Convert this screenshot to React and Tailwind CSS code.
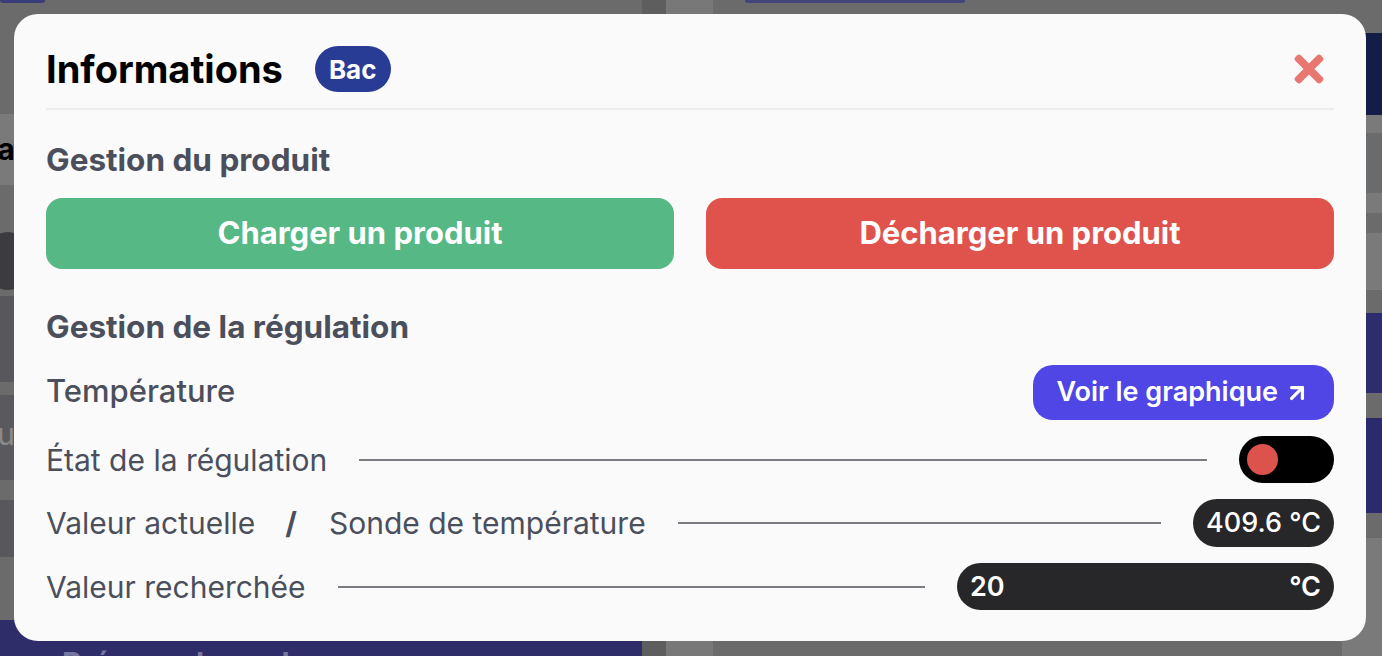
import { FaTimes } from "react-icons/fa";
import { ArrowUpRight } from "lucide-react";

function Band({ className, children }) {
    return <div className={`w-full shrink-0 ${className}`}>{children}</div>;
}

function Gap({ h }) {
    return <div className="shrink-0" style={{ height: h }} />;
}

function Row({ children }) {
    return <div className="flex items-center gap-8 text-[30px] leading-9 text-[#4b4f5c]">{children}</div>;
}

function Line() {
    return <div className="flex-1 h-[2px] bg-[#7b7b82]" />;
}

export default function App() {
    return (
        <div className="relative w-[1382px] h-[656px] overflow-hidden bg-[#6b6b6b]" style={{ fontFamily: "Inter, 'Liberation Sans', sans-serif" }}>
            {/* dimmed page behind the modal */}
            <div className="flex h-full">
                <div className="w-[642px] flex flex-col">
                    <div className="shrink-0 h-[3px] w-[45px] rounded-b-lg bg-[#3a3d78]" />
                    <Gap h={111} />
                    <Band className="h-[71px] bg-[#7a7a7a] pt-5">
                        <div className="w-[15px] overflow-hidden flex justify-end">
                            <span className="whitespace-nowrap text-[30px] font-bold text-black leading-none">Standa</span>
                        </div>
                    </Band>
                    <Gap h={47} />
                    <div className="shrink-0 h-[58px] w-[44px] rounded-full bg-[#3c3c40] -ml-[14px]" />
                    <Gap h={6} />
                    <Band className="h-[86px] bg-[#58585c]" />
                    <Gap h={13} />
                    <Band className="h-[85px] bg-[#5a5a5e] pt-6">
                        <div className="w-[15px] overflow-hidden flex justify-end">
                            <span className="whitespace-nowrap text-[30px] text-[#8a8a8a] leading-none">Cu</span>
                        </div>
                    </Band>
                    <Gap h={20} />
                    <Band className="h-[57px] bg-[#58585c]" />
                    <Gap h={63} />
                    <div className="flex-1 min-h-0 overflow-hidden bg-[#2e2d6a] pl-[62px] pt-[28px] text-[30px] font-bold text-[#77769e] leading-none">Préparer le cycle</div>
                </div>
                <div className="w-[24px] bg-[#5e5e5e]" />
                <div className="w-[47px] bg-[#787878]" />
                <div className="flex-1 flex flex-col">
                    <div className="shrink-0 ml-[32px] h-[3px] w-[220px] rounded-b-lg bg-[#434578]" />
                    <Gap h={30} />
                    <div className="flex flex-col flex-1 min-h-0 items-end">
                        <div className="shrink-0 h-[82px] w-[40px] bg-[#141c48]" />
                        <div className="shrink-0 h-[18px] w-[40px] bg-[#7a7a7a]" />
                        <div className="shrink-0 h-[60px] w-[40px] bg-[#6a6b6d]" />
                        <div className="shrink-0 h-[20px] w-[40px] bg-[#7a7a7a]" />
                        <div className="shrink-0 h-[20px] w-[40px]" />
                        <div className="shrink-0 h-[57px] w-[40px] bg-[#7a7a7a]" />
                        <div className="shrink-0 h-[23px] w-[40px]" />
                        <div className="shrink-0 h-[80px] w-[40px] bg-[#2d2c6c]" />
                        <div className="shrink-0 h-[25px] w-[40px]" />
                        <div className="shrink-0 h-[95px] w-[40px] bg-[#2b2a6c]" />
                        <div className="shrink-0 h-[25px] w-[40px]" />
                        <div className="flex-1 w-[40px] bg-[#7a7a7a]" />
                    </div>
                </div>
            </div>

            {/* modal */}
            <div className="absolute inset-0 pt-[14px] pl-[14px] pr-[16px] pb-[15px]">
                <div className="h-full rounded-[24px] bg-[#fafafa] p-8 flex flex-col">
                    <div className="flex items-center">
                        <h1 className="text-[38px] leading-none font-bold text-black">Informations</h1>
                        <span className="ml-8 h-[46px] px-[14px] rounded-full bg-[#283c96] text-white text-[26px] font-bold flex items-center">Bac</span>
                        <button className="ml-auto mr-[4px] text-[#e8776f]">
                            <FaTimes size={42} />
                        </button>
                    </div>
                    <div className="mt-4 h-[2px] shrink-0 bg-[#ececec]" />

                    <h2 className="mt-8 text-[31.5px] leading-9 font-bold text-[#4b4f5c]">Gestion du produit</h2>
                    <div className="mt-5 grid grid-cols-2 gap-8">
                        <button className="h-[71px] rounded-2xl bg-[#55b885] text-white text-[31px] font-bold">Charger un produit</button>
                        <button className="h-[71px] rounded-2xl bg-[#e0534d] text-white text-[31px] font-bold">Décharger un produit</button>
                    </div>

                    <h2 className="mt-10 text-[31.5px] leading-9 font-bold text-[#4b4f5c]">Gestion de la régulation</h2>
                    <div className="mt-5 flex flex-col gap-4">
                        <div className="flex items-center justify-between">
                            <span className="text-[31px] leading-9 font-medium text-[#4b4f5c] -mt-1">Température</span>
                            <button className="h-[55px] pl-[23px] pr-6 rounded-[20px] bg-[#4f46e5] text-white text-[27px] font-semibold flex items-center gap-[6px]">
                                Voir le graphique
                                <ArrowUpRight size={26} strokeWidth={3} />
                            </button>
                        </div>
                        <Row>
                            <span>État de la régulation</span>
                            <Line />
                            <div className="h-[47px] w-[95px] rounded-full bg-black flex items-center px-2">
                                <div className="h-[31px] w-[31px] rounded-full bg-[#dc524c]" />
                            </div>
                        </Row>
                        <Row>
                            <span className="flex items-center gap-8">
                                Valeur actuelle
                                <span className="font-bold -ml-[2px]">/</span>
                                Sonde de température
                            </span>
                            <Line />
                            <span className="h-[48px] px-[13px] rounded-full bg-[#27272a] text-white text-[27px] font-medium flex items-center">409.6 °C</span>
                        </Row>
                        <Row>
                            <span>Valeur recherchée</span>
                            <Line />
                            <div className="h-[47px] w-[377px] rounded-full bg-[#27272a] text-white text-[27px] font-semibold flex items-center justify-between px-[13px]">
                                <span>20</span>
                                <span>°C</span>
                            </div>
                        </Row>
                    </div>
                </div>
            </div>
        </div>
    );
}
